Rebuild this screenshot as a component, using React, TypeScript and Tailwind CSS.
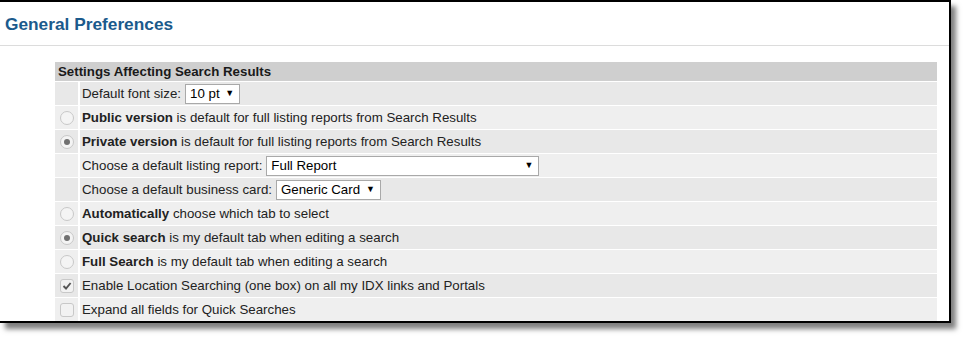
import React from "react";

type Row = {
  kind: "select" | "radio" | "check";
  checked?: boolean;
  bold?: string;
  text: string;
  select?: { label: string; width: string };
};

const rows: Row[] = [
  { kind: "select", text: "Default font size:", select: { label: "10 pt", width: "w-[55px]" } },
  { kind: "radio", bold: "Public version", text: " is default for full listing reports from Search Results" },
  { kind: "radio", checked: true, bold: "Private version", text: " is default for full listing reports from Search Results" },
  { kind: "select", text: "Choose a default listing report:", select: { label: "Full Report", width: "w-[273px]" } },
  { kind: "select", text: "Choose a default business card:", select: { label: "Generic Card", width: "w-[105px]" } },
  { kind: "radio", bold: "Automatically", text: " choose which tab to select" },
  { kind: "radio", checked: true, bold: "Quick search", text: " is my default tab when editing a search" },
  { kind: "radio", bold: "Full Search", text: " is my default tab when editing a search" },
  { kind: "check", checked: true, text: "Enable Location Searching (one box) on all my IDX links and Portals" },
  { kind: "check", text: "Expand all fields for Quick Searches" },
];

function Radio({ checked }: { checked?: boolean }) {
  return (
    <span className="flex h-[14px] w-[14px] items-center justify-center rounded-full border border-[#c8c8c8] bg-[#f4f4f4]">
      {checked && <span className="h-[6px] w-[6px] rounded-full bg-[#707070]" />}
    </span>
  );
}

function Check({ checked }: { checked?: boolean }) {
  return (
    <span className="flex h-[14px] w-[14px] items-center justify-center rounded-[3px] border border-[#c8c8c8] bg-[#f2f2f2]">
      {checked && (
        <svg width="10" height="10" viewBox="0 0 10 10">
          <path d="M1.5 5 L4 7.5 L8.6 2" fill="none" stroke="#555" strokeWidth="1.9" />
        </svg>
      )}
    </span>
  );
}

function Select({ label, width }: { label: string; width: string }) {
  return (
    <span className={`ml-[4px] flex h-[20px] ${width} items-center justify-between border border-[#a9a9a9] bg-white pl-[4px] pr-[5px] text-black`}>
      <span>{label}</span>
      <span className="text-[9px]">▼</span>
    </span>
  );
}

export default function App() {
  return (
    <div className="h-[338px] w-[965px] bg-white" style={{ fontFamily: "'Liberation Sans', Arial, sans-serif" }}>
      <div className="h-[323px] w-[951px] overflow-hidden border-y-2 border-r-2 border-black bg-white shadow-[5px_6px_5px_rgba(0,0,0,0.5)]">
        <div className="flex h-[44px] items-center border-b border-[#dcdcdc] pl-[5px] pt-[2px]">
          <h1 className="text-[17.3px] font-bold text-[#1b5a8c]">General Preferences</h1>
        </div>
        <div className="ml-[55px] mt-[16px] w-[882px] text-[13.3px] text-[#222]">
          <div className="flex h-[19px] items-center bg-[#cfcfcf] pl-[3px] font-bold text-[#1a1a1a]">
            Settings Affecting Search Results
          </div>
          {rows.map((r, i) => (
            <div
              key={i}
              className={`flex h-[24px] border-t border-white ${i % 2 === 0 ? "bg-[#e8e8e8]" : "bg-[#efefef]"}`}
            >
              <div className="flex w-[25px] items-center justify-center border-r-2 border-white">
                {r.kind === "radio" && <Radio checked={r.checked} />}
                {r.kind === "check" && <Check checked={r.checked} />}
              </div>
              <div className="flex items-center pl-[2px]">
                {r.bold && <b className="font-bold">{r.bold}</b>}
                <span className="whitespace-pre">{r.text}</span>
                {r.select && <Select label={r.select.label} width={r.select.width} />}
              </div>
            </div>
          ))}
        </div>
      </div>
    </div>
  );
}
